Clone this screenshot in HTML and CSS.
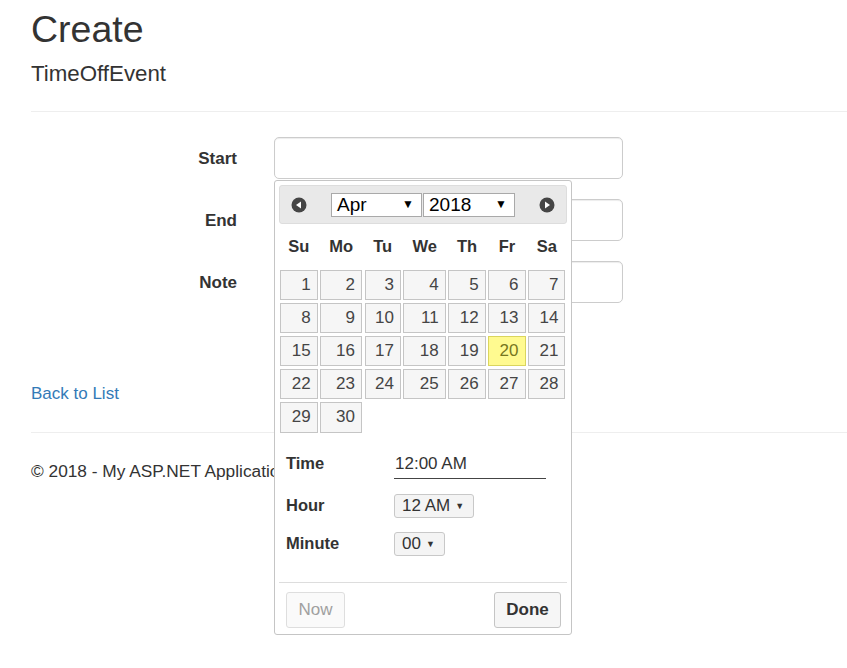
FILE: index.html
```html
<!DOCTYPE html>
<html lang="en">
<head>
<meta charset="utf-8">
<title>Create - My ASP.NET Application</title>
<link rel="stylesheet" href="styles.css">
</head>
<body>
<div class="page">
  <h2 class="title">Create</h2>
  <h4 class="subtitle">TimeOffEvent</h4>
  <hr class="rule rule-top">

  <form class="form">
    <div class="form-row">
      <label class="form-label">Start</label>
      <div class="form-input"></div>
    </div>
    <div class="form-row">
      <label class="form-label">End</label>
      <div class="form-input"></div>
    </div>
    <div class="form-row">
      <label class="form-label">Note</label>
      <div class="form-input"></div>
    </div>
  </form>

  <div class="back"><a class="link" href="#">Back to List</a></div>
  <hr class="rule rule-footer">
  <footer class="footer">© 2018 - My ASP.NET Application</footer>
</div>

<div class="datepicker">
  <div class="dp-header">
    <span class="dp-nav">
      <svg width="16" height="16" viewBox="0 0 16 16"><circle cx="8" cy="8" r="7.5" fill="#454545"/><polygon points="5,8 10,4.5 10,11.5" fill="#fff"/></svg>
    </span>
    <div class="dp-title">
      <div class="dp-select dp-month"><span>Apr</span><span class="dp-arrow">▼</span></div>
      <div class="dp-select dp-year"><span>2018</span><span class="dp-arrow">▼</span></div>
    </div>
    <span class="dp-nav">
      <svg width="16" height="16" viewBox="0 0 16 16"><circle cx="8" cy="8" r="7.5" fill="#454545"/><polygon points="11,8 6,4.5 6,11.5" fill="#fff"/></svg>
    </span>
  </div>

  <div class="dp-grid dp-dow">
    <span>Su</span><span>Mo</span><span>Tu</span><span>We</span><span>Th</span><span>Fr</span><span>Sa</span>
  </div>

  <div class="dp-grid dp-days">
    <a class="day">1</a><a class="day">2</a><a class="day">3</a><a class="day">4</a><a class="day">5</a><a class="day">6</a><a class="day">7</a>
    <a class="day">8</a><a class="day">9</a><a class="day">10</a><a class="day">11</a><a class="day">12</a><a class="day">13</a><a class="day">14</a>
    <a class="day">15</a><a class="day">16</a><a class="day">17</a><a class="day">18</a><a class="day">19</a><a class="day day-today">20</a><a class="day">21</a>
    <a class="day">22</a><a class="day">23</a><a class="day">24</a><a class="day">25</a><a class="day">26</a><a class="day">27</a><a class="day">28</a>
    <a class="day">29</a><a class="day">30</a>
  </div>

  <div class="tp">
    <div class="tp-row tp-row-time">
      <span class="tp-label">Time</span>
      <span class="tp-time">12:00 AM</span>
    </div>
    <div class="tp-row tp-row-hour">
      <span class="tp-label">Hour</span>
      <span class="tp-select tp-hour">12 AM <span class="tp-arrow">▼</span></span>
    </div>
    <div class="tp-row tp-row-minute">
      <span class="tp-label">Minute</span>
      <span class="tp-select tp-minute">00 <span class="tp-arrow">▼</span></span>
    </div>
  </div>

  <div class="dp-buttons">
    <button class="btn btn-now" type="button">Now</button>
    <button class="btn btn-done" type="button">Done</button>
  </div>
</div>
</body>
</html>
```

FILE: styles.css
```css
html, body {
  margin: 0;
  padding: 0;
  background: #fff;
}

body {
  font-family: "Liberation Sans", Arial, Helvetica, sans-serif;
  font-size: 17px;
  line-height: 1.42857;
  color: #333;
}

.page {
  padding-left: 31px;
}

.title {
  margin: 9px 0 0;
  font-size: 37.5px;
  font-weight: normal;
  line-height: 1.1;
}

.subtitle {
  margin: 12px 0 0;
  font-size: 22.3px;
  font-weight: normal;
  line-height: 1.1;
}

.rule {
  border: 0;
  border-top: 1px solid #eee;
  margin: 0;
}

.rule-top {
  margin-top: 24px;
}

.form {
  display: flex;
  flex-direction: column;
  gap: 20px;
  margin-top: 25px;
}

.form-row {
  display: flex;
  align-items: center;
  height: 42px;
}

.form-label {
  width: 206px;
  text-align: right;
  font-weight: bold;
  font-size: 17px;
  padding-top: 2px;
}

.form-input {
  margin-left: 37px;
  width: 347px;
  height: 40px;
  border: 1px solid #ccc;
  border-radius: 5px;
  background: #fff;
  box-shadow: inset 0 1px 1px rgba(0, 0, 0, 0.075);
}

.back {
  margin-top: 81px;
  line-height: 20px;
}

.link {
  color: #337ab7;
  text-decoration: none;
}

.rule-footer {
  margin-top: 28px;
}

.footer {
  margin-top: 28px;
  line-height: 20px;
  font-size: 17.3px;
}

/* Datepicker overlay */
.datepicker {
  position: absolute;
  left: 274px;
  top: 180px;
  width: 288px;
  padding: 4px 4px 6px;
  border: 1px solid #c5c5c5;
  border-radius: 3px;
  background: #fff;
  color: #333;
  font-size: 17px;
}

.dp-header {
  display: flex;
  align-items: center;
  justify-content: space-between;
  height: 37px;
  padding: 0 11px 0 11px;
  background: #e9e9e9;
  border: 1px solid #ddd;
  border-radius: 3px;
}

.dp-nav {
  display: flex;
  width: 16px;
  height: 16px;
}

.dp-title {
  display: flex;
  gap: 1px;
}

.dp-select {
  display: flex;
  align-items: center;
  justify-content: space-between;
  box-sizing: border-box;
  height: 24px;
  padding: 0 7px 0 5px;
  background: #fff;
  border: 1px solid #a9a9a9;
  font-size: 19px;
  color: #000;
}

.dp-month {
  width: 91px;
}

.dp-year {
  width: 92px;
}

.dp-arrow {
  font-size: 12px;
}

.dp-grid {
  display: grid;
  grid-template-columns: 37.7px 41.7px 36.3px 42.3px 37.3px 37.3px 37.3px;
  column-gap: 2.6px;
  padding-left: 1px;
}

.dp-dow {
  height: 43px;
  padding-top: 2px;
  box-sizing: border-box;
  align-items: center;
  text-align: center;
  font-weight: bold;
  font-size: 16.5px;
}

.dp-days {
  margin-top: 2.5px;
  grid-auto-rows: 30.7px;
  row-gap: 2.4px;
}

.day {
  box-sizing: border-box;
  display: flex;
  align-items: center;
  justify-content: flex-end;
  padding-right: 6px;
  border: 1px solid #c5c5c5;
  background: #f6f6f6;
  color: #454545;
  font-size: 17px;
}

.day-today {
  background: #fffa90;
  border-color: #dad55e;
  color: #777620;
}

.tp {
  padding: 17px 0 0 7px;
}

.tp-row {
  display: flex;
  align-items: center;
}

.tp-label {
  width: 108px;
  font-weight: bold;
  font-size: 16.5px;
}

.tp-row-time {
  height: 28px;
}

.tp-time {
  width: 151px;
  padding: 0 0 2px 1px;
  border-bottom: 1px solid #444;
  margin-top: 4px;
  font-size: 17px;
  color: #333;
}

.tp-row-hour {
  margin-top: 16px;
  height: 25px;
}

.tp-row-minute {
  margin-top: 13px;
  height: 25px;
}

.tp-select {
  box-sizing: border-box;
  display: inline-flex;
  align-items: center;
  gap: 5px;
  height: 23.5px;
  padding: 0 9px 0 7px;
  border: 1px solid #c8c8c8;
  border-radius: 3px;
  background: #f4f4f4;
  font-size: 17px;
  color: #333;
}

.tp-arrow {
  font-size: 9px;
}

.dp-buttons {
  display: flex;
  justify-content: space-between;
  margin-top: 25px;
  padding: 9px 6px 0 7px;
  border-top: 1px solid #ddd;
}

.btn {
  box-sizing: border-box;
  height: 36px;
  padding: 0 8px;
  border-radius: 3px;
  font-family: "Liberation Sans", Arial, Helvetica, sans-serif;
  font-size: 17px;
}

.btn-now {
  width: 59px;
  border: 1px solid #dedede;
  background: #fafafa;
  color: #a0a0a0;
}

.btn-done {
  width: 67px;
  border: 1px solid #c5c5c5;
  background: #f6f6f6;
  color: #333;
  font-weight: bold;
}
```
